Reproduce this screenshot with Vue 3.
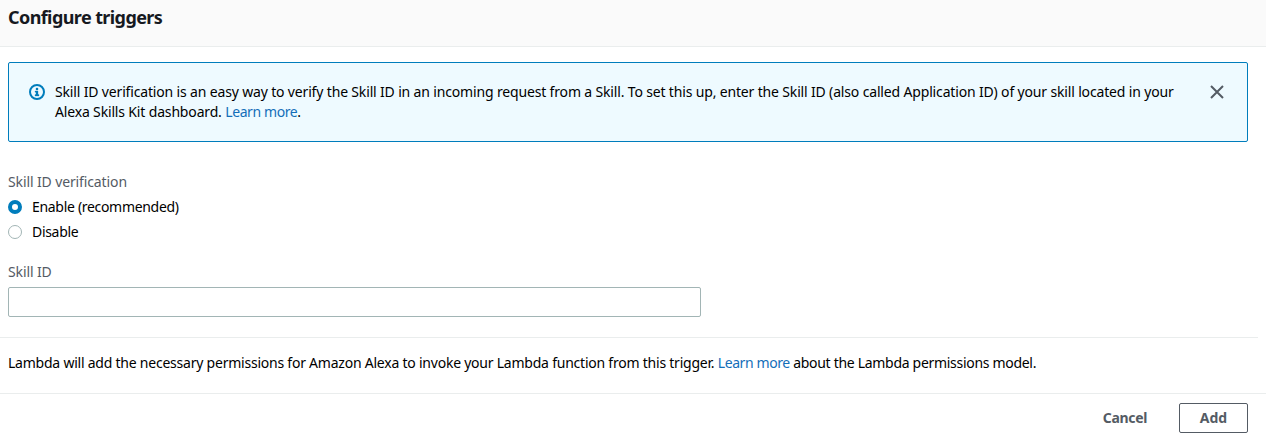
<script setup>
import { ref } from 'vue'

const verification = ref('enable')
const skillId = ref('')
const options = [
  { value: 'enable', label: 'Enable (recommended)' },
  { value: 'disable', label: 'Disable' },
]
</script>

<template>
  <div class="dialog">
    <header class="header"><h2>Configure triggers</h2></header>
    <main class="body">
      <div class="alert">
        <svg class="info" viewBox="0 0 16 16" width="16" height="16">
          <circle cx="8" cy="8" r="7" fill="none" stroke="#007dbc" stroke-width="2" />
          <path d="M7 4h2v2H7zM6 7h3v3.5h1V12H6v-1.5h1V8.2H6z" fill="#007dbc" stroke="#007dbc" stroke-width="0.3" />
        </svg>
        <p class="message">
          Skill ID verification is an easy way to verify the Skill ID in an incoming request from a Skill. To set this up, enter the Skill ID (also called Application ID) of your skill located in your<br />
          Alexa Skills Kit dashboard. <a>Learn more</a>.
        </p>
        <svg class="close" viewBox="0 0 14 14" width="14" height="14">
          <path d="M1 1l12 12M13 1L1 13" fill="none" stroke="#545b64" stroke-width="2" />
        </svg>
      </div>
      <div class="label first">Skill ID verification</div>
      <label v-for="o in options" :key="o.value" class="option">
        <input v-model="verification" type="radio" name="verification" :value="o.value" />
        <span>{{ o.label }}</span>
      </label>
      <div class="label second">Skill ID</div>
      <input v-model="skillId" class="field" type="text" />
      <p class="note">Lambda will add the necessary permissions for Amazon Alexa to invoke your Lambda function from this trigger. <a>Learn more</a><span class="tail"> about the Lambda permissions model.</span></p>
    </main>
    <footer class="footer">
      <button class="cancel">Cancel</button>
      <button class="add">Add</button>
    </footer>
  </div>
</template>

<style>
body { background: #fff; overflow: hidden; }
</style>

<style scoped>
.dialog {
  box-sizing: border-box;
  height: 440px;
  font: 14px/20px "Noto Sans", "Open Sans", sans-serif;
  color: #000;
  white-space: nowrap;
}
h2, p { margin: 0; }
a { color: #146eb9; letter-spacing: -0.4px; }
.header {
  box-sizing: border-box;
  height: 47px;
  padding: 6px 8px 0;
  background: #fafafa;
  border-bottom: 1px solid #eaeded;
}
h2 { font-size: 18px; line-height: 22px; font-weight: 700; color: #16191f; letter-spacing: -0.59px; }
.body { padding: 15px 8px 0; height: 331px; }
.alert {
  box-sizing: border-box;
  display: flex;
  width: 1240px;
  height: 80px;
  padding: 19px 23px 0 20px;
  background: #eefaff;
  border: 1px solid #007dbc;
  border-radius: 2px;
}
.info { margin-top: 2px; flex: none; }
.message { flex: 1; margin-left: 10px; min-width: 0; letter-spacing: -0.159px; }
.close { margin-top: 3px; flex: none; }
.label { color: #545b64; letter-spacing: -0.12px; }
.first { margin-top: 30px; margin-bottom: 5px; }
.option { display: flex; align-items: center; height: 20px; margin-bottom: 5px; letter-spacing: -0.31px; }
.option input {
  appearance: none;
  box-sizing: border-box;
  width: 14px;
  height: 14px;
  margin: 0 10px 0 0;
  border: 1px solid #a2b5b5;
  border-radius: 50%;
  background: #fff;
}
.option input:checked { border: 4px solid #007dbc; }
.second { margin-top: 20px; margin-bottom: 5px; }
.field {
  display: block;
  box-sizing: border-box;
  width: 693px;
  height: 30px;
  padding: 4px 10px;
  border: 1px solid #a2b5b5;
  border-radius: 2px;
  font: inherit;
  outline: none;
}
.note {
  margin: 20px 0 0 -8px;
  width: 1250px;
  padding: 15px 0 0 8px;
  border-top: 1px solid #eaeded;
  letter-spacing: -0.228px;
}
.tail { letter-spacing: -0.3px; }
.footer {
  box-sizing: border-box;
  display: flex;
  justify-content: flex-end;
  height: 47px;
  padding: 9px 18px 0 0;
  border-top: 1px solid #eaeded;
}
button {
  box-sizing: border-box;
  height: 30px;
  padding: 0;
  border: 1px solid transparent;
  border-radius: 2px;
  background: #fff;
  font: 700 14px/20px "Noto Sans", "Open Sans", sans-serif;
  color: #545b64;
}
.cancel { width: 88px; margin-right: 10px; letter-spacing: -0.3px; }
.add { width: 69px; border-color: #545b64; }
</style>
